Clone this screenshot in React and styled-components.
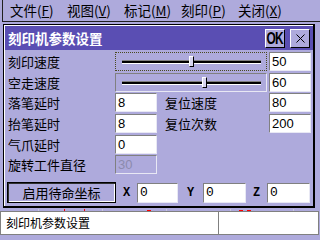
import React from 'react';
import styled, { createGlobalStyle } from 'styled-components';

const GlobalStyle = createGlobalStyle`
  html, body {
    margin: 0;
    padding: 0;
    background: #aeaadc;
  }
  body {
    font-family: "Noto Sans CJK SC", "Liberation Sans", sans-serif;
    color: #000;
  }
`;

const Screen = styled.div`
  width: 320px;
  height: 240px;
  overflow: hidden;
  background: #aeaadc;
  font-size: 13px;
`;

const MenuBar = styled.div`
  display: flex;
  height: 21px;
  margin-left: 2px;
  padding-left: 7px;
  border-left: 1px solid #202020;
  border-bottom: 1px solid #202020;
  align-items: center;
`;

const MenuItem = styled.div`
  width: 57px;
  line-height: 21px;
  white-space: nowrap;
  font-size: 13.5px;

  u {
    text-decoration: underline;
    text-underline-offset: 1px;
  }
`;

const Dialog = styled.div`
  width: 309px;
  margin: 2px 0 0 3px;
  border-top: 1px solid #000;
  border-left: 1px solid #000;
  border-right: 2px solid #000;
  border-bottom: 2px solid #000;
`;

const DialogInner = styled.div`
  border-top: 1px solid #fff;
  border-left: 1px solid #fff;
  padding-bottom: 3px;
`;

const TitleBar = styled.div`
  display: flex;
  align-items: center;
  height: 24px;
  padding: 0 3px;
  background: #5a4eb3;
  color: #fff;
  font-weight: bold;
  font-size: 13.5px;
  gap: 5px;

  span {
    flex: 1;
  }
`;

const TitleButton = styled.div`
  display: flex;
  align-items: center;
  justify-content: center;
  width: 18px;
  height: 17px;
  background: #aeaadc;
  border-top: 1px solid #fff;
  border-left: 1px solid #fff;
  border-right: 1px solid #000;
  border-bottom: 1px solid #000;
  color: #000;
  font-family: "Liberation Sans", sans-serif;
  font-weight: bold;

  b {
    display: inline-block;
    font-size: 17px;
    line-height: 17px;
    transform: scaleX(0.7);
    letter-spacing: -1px;
  }
`;

const Form = styled.div`
  display: grid;
  grid-template-columns: 110px 42px 112px 42px;
  grid-template-rows: 21px 20px 21px 21px 20px 19px;
  margin-top: 2px;
  padding-right: 2px;
`;

const Label = styled.div`
  padding-left: ${p => (p.$right ? 8 : 3)}px;
  line-height: 19px;
  white-space: nowrap;
`;

const Field = styled.div`
  box-sizing: border-box;
  height: 19px;
  padding-left: 2px;
  background: ${p => (p.$disabled ? '#aeaadc' : '#fff')};
  color: ${p => (p.$disabled ? '#8c8aae' : '#000')};
  border-top: 1px solid #808080;
  border-left: 1px solid #808080;
  border-right: 1px solid #e8e8f4;
  border-bottom: 1px solid #e8e8f4;
  font-family: ${p => (p.$mono ? '"Liberation Mono", monospace' : '"Liberation Sans", sans-serif')};
  font-size: 13px;
  line-height: 17px;
`;

const SliderBox = styled.div`
  grid-column: 2 / 4;
  box-sizing: border-box;
  height: 19px;
  margin-right: 2px;
  padding: 0 5px 0 6px;
  display: flex;
  align-items: center;
  border-top: ${p => (p.$focused ? '1px dotted #4a4a20' : '1px solid #808080')};
  border-left: ${p => (p.$focused ? '1px dotted #4a4a20' : '1px solid #808080')};
  border-right: ${p => (p.$focused ? '1px dotted #4a4a20' : '1px solid #e8e8f4')};
  border-bottom: ${p => (p.$focused ? '1px dotted #4a4a20' : '1px solid #e8e8f4')};
`;

const Track = styled.div`
  position: relative;
  flex: 1;
  height: 2px;
  background: #000;
  border-top: 1px solid #808080;
  border-bottom: 1px solid #fff;
`;

const Thumb = styled.div`
  position: absolute;
  top: -5px;
  width: 3px;
  height: 9px;
  margin-left: -3px;
  background: #d8d6ee;
  border-top: 1px solid #fff;
  border-left: 1px solid #fff;
  border-right: 1px solid #000;
  border-bottom: 1px solid #000;
`;

const CoordRow = styled.div`
  display: flex;
  align-items: center;
  margin-top: 8px;
  padding-left: 2px;
`;

const CommandButton = styled.div`
  box-sizing: border-box;
  width: 109px;
  height: 21px;
  border: 1px solid #000;
  box-shadow: inset 1px 1px #303030, inset -1px -1px #fff;
  text-align: center;
  line-height: 19px;
`;

const AxisLabel = styled.div`
  width: ${p => p.$w}px;
  text-align: center;
  font-family: "Liberation Mono", monospace;
  font-weight: bold;
  font-size: 12px;
`;

const CoordField = styled(Field)`
  width: ${p => p.$w}px;
  height: 20px;
  line-height: 18px;
`;

const CanvasStrip = styled.div`
  position: relative;
  height: 3px;
`;

const Mark = styled.div`
  position: absolute;
  top: ${p => p.$top}px;
  left: ${p => p.$x}px;
  width: ${p => p.$w}px;
  height: ${p => 3 - p.$top}px;
  background: ${p => p.$color};
`;

const StatusBar = styled.div`
  display: grid;
  grid-template-columns: 219px 100px;
  height: 24px;
`;

const StatusPanel = styled.div`
  box-sizing: border-box;
  background: #fff;
  border: 1px solid #808080;
  border-left: ${p => (p.$first ? '1px solid #808080' : 'none')};
  padding-left: 5px;
  font-size: 12px;
  line-height: 22px;
`;

const menus = [
  ['文件', 'F'],
  ['视图', 'V'],
  ['标记', 'M'],
  ['刻印', 'P'],
  ['关闭', 'X'],
];

const marks = [
  { x: 38, w: 1, top: 1, color: '#c8c8d8' },
  { x: 64, w: 1, top: 1, color: '#ff0000' },
  { x: 84, w: 1, top: 1, color: '#ff0000' },
  { x: 102, w: 1, top: 1, color: '#c8c8d8' },
  { x: 147, w: 4, top: 2, color: '#ff0000' },
  { x: 166, w: 1, top: 1, color: '#c8c8d8' },
  { x: 230, w: 1, top: 1, color: '#c8c8d8' },
  { x: 239, w: 4, top: 2, color: '#ff0000' },
  { x: 247, w: 4, top: 2, color: '#ff0000' },
  { x: 293, w: 1, top: 1, color: '#c8c8d8' },
];

function Slider({ value, focused }) {
  return (
    <SliderBox $focused={focused}>
      <Track>
        <Thumb style={{ left: `${value}%` }} />
      </Track>
    </SliderBox>
  );
}

export default function App() {
  return (
    <Screen>
      <GlobalStyle />
      <MenuBar>
        {menus.map(([name, key]) => (
          <MenuItem key={key}>
            {name}(<u>{key}</u>)
          </MenuItem>
        ))}
      </MenuBar>

      <Dialog>
        <DialogInner>
          <TitleBar>
            <span>刻印机参数设置</span>
            <TitleButton><b>OK</b></TitleButton>
            <TitleButton>
              <svg width="9" height="9" viewBox="0 0 9 9">
                <path d="M0.5 0.5 L8.5 8.5 M8.5 0.5 L0.5 8.5" stroke="#000" strokeWidth="1" />
              </svg>
            </TitleButton>
          </TitleBar>

          <Form>
            <Label>刻印速度</Label>
            <Slider value={50} focused />
            <Field>50</Field>

            <Label>空走速度</Label>
            <Slider value={60} />
            <Field>60</Field>

            <Label>落笔延时</Label>
            <Field>8</Field>
            <Label $right>复位速度</Label>
            <Field>80</Field>

            <Label>抬笔延时</Label>
            <Field>8</Field>
            <Label $right>复位次数</Label>
            <Field>200</Field>

            <Label>气爪延时</Label>
            <Field>0</Field>
            <div />
            <div />

            <Label>旋转工件直径</Label>
            <Field $disabled>30</Field>
          </Form>

          <CoordRow>
            <CommandButton>启用待命坐标</CommandButton>
            <AxisLabel $w={21}>X</AxisLabel>
            <CoordField $mono $w={41}>0</CoordField>
            <AxisLabel $w={25}>Y</AxisLabel>
            <CoordField $mono $w={43}>0</CoordField>
            <AxisLabel $w={21}>Z</AxisLabel>
            <CoordField $mono $w={43}>0</CoordField>
          </CoordRow>
        </DialogInner>
      </Dialog>

      <CanvasStrip>
        {marks.map(m => (
          <Mark key={m.x} $x={m.x} $w={m.w} $top={m.top} $color={m.color} />
        ))}
      </CanvasStrip>

      <StatusBar>
        <StatusPanel $first>刻印机参数设置</StatusPanel>
        <StatusPanel />
      </StatusBar>
    </Screen>
  );
}
